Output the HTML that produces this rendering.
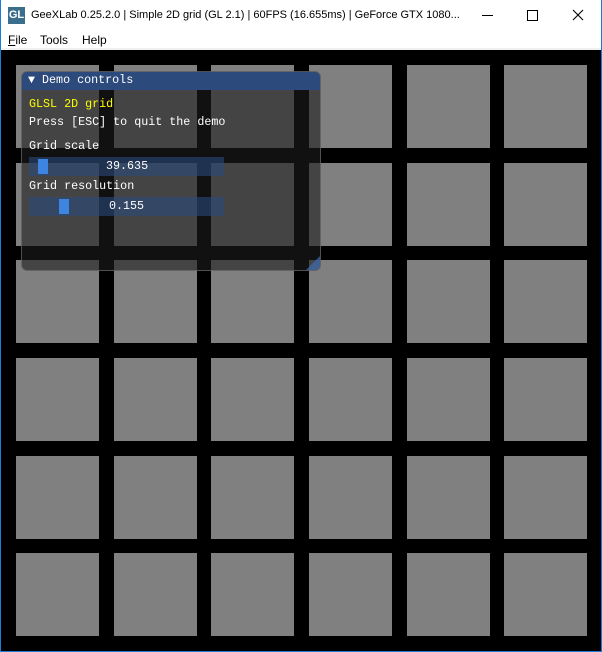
<!DOCTYPE html>
<html><head><style>
body{margin:0;width:602px;height:652px;overflow:hidden;background:#fff;font-family:"Liberation Sans",sans-serif;position:relative}
.abs{position:absolute}
.sq{position:absolute;width:83px;height:83px;background:#808080}
.mono{font-family:"Liberation Mono",monospace;font-size:11.7px;color:#fff;white-space:pre;position:absolute}
.m{position:absolute;top:33px;font-size:12px;color:#000}
</style></head><body>
<div class="abs" style="left:1px;top:50px;width:600px;height:601px;background:#000"></div>
<div class="sq" style="left:16px;top:65px"></div><div class="sq" style="left:114px;top:65px"></div><div class="sq" style="left:211px;top:65px"></div><div class="sq" style="left:309px;top:65px"></div><div class="sq" style="left:407px;top:65px"></div><div class="sq" style="left:504px;top:65px"></div>
<div class="sq" style="left:16px;top:163px"></div><div class="sq" style="left:114px;top:163px"></div><div class="sq" style="left:211px;top:163px"></div><div class="sq" style="left:309px;top:163px"></div><div class="sq" style="left:407px;top:163px"></div><div class="sq" style="left:504px;top:163px"></div>
<div class="sq" style="left:16px;top:260px"></div><div class="sq" style="left:114px;top:260px"></div><div class="sq" style="left:211px;top:260px"></div><div class="sq" style="left:309px;top:260px"></div><div class="sq" style="left:407px;top:260px"></div><div class="sq" style="left:504px;top:260px"></div>
<div class="sq" style="left:16px;top:358px"></div><div class="sq" style="left:114px;top:358px"></div><div class="sq" style="left:211px;top:358px"></div><div class="sq" style="left:309px;top:358px"></div><div class="sq" style="left:407px;top:358px"></div><div class="sq" style="left:504px;top:358px"></div>
<div class="sq" style="left:16px;top:456px"></div><div class="sq" style="left:114px;top:456px"></div><div class="sq" style="left:211px;top:456px"></div><div class="sq" style="left:309px;top:456px"></div><div class="sq" style="left:407px;top:456px"></div><div class="sq" style="left:504px;top:456px"></div>
<div class="sq" style="left:16px;top:553px"></div><div class="sq" style="left:114px;top:553px"></div><div class="sq" style="left:211px;top:553px"></div><div class="sq" style="left:309px;top:553px"></div><div class="sq" style="left:407px;top:553px"></div><div class="sq" style="left:504px;top:553px"></div>
<div class="abs" style="left:0;top:0;width:602px;height:652px;box-sizing:border-box;border:1px solid #1e7bd6;border-top:none"></div>
<div class="abs" style="left:8px;top:7px;width:17px;height:17px;background:#3a6e8a;color:#fff;font-size:11px;font-weight:bold;line-height:17px;text-align:center">GL</div>
<div class="abs" style="left:31px;top:9px;font-size:11px;color:#000;white-space:nowrap">GeeXLab 0.25.2.0 | Simple 2D grid (GL 2.1) | 60FPS (16.655ms) | GeForce GTX 1080...</div>
<div class="abs" style="left:482px;top:15px;width:11px;height:1px;background:#000"></div>
<div class="abs" style="left:527px;top:10px;width:9px;height:9px;border:1px solid #000"></div>
<svg class="abs" style="left:572px;top:9px" width="12" height="12"><path d="M1 1L11 11M11 1L1 11" stroke="#000" stroke-width="1.1"/></svg>
<div class="m" style="left:8px"><u>F</u>ile</div>
<div class="m" style="left:40px">Tools</div>
<div class="m" style="left:82px">Help</div>
<div class="abs" style="left:1px;top:48px;width:600px;height:2px;background:#f0f0f0"></div>
<div class="abs" style="left:21px;top:71px;width:298px;height:198px;background:rgba(28,28,28,0.6);border:1px solid rgba(120,120,130,0.6);border-radius:6px;overflow:hidden">
<div class="abs" style="left:0;top:0;width:298px;height:18px;background:#2d4a7d"></div>
<div class="abs" style="right:0;bottom:0;width:0;height:0;border-left:14px solid transparent;border-bottom:14px solid rgba(60,110,180,0.7)"></div>
</div>
<div class="mono" style="left:28px;top:73px">▼ Demo controls</div>
<div class="mono" style="left:29px;top:97px;color:#ffff00">GLSL 2D grid</div>
<div class="mono" style="left:29px;top:115px">Press [ESC] to quit the demo</div>
<div class="mono" style="left:29px;top:139px">Grid scale</div>
<div class="abs" style="left:29px;top:157px;width:195px;height:19px;background:rgba(41,74,122,0.6)"></div>
<div class="abs" style="left:38px;top:159px;width:10px;height:15px;background:#3d85e0"></div>
<div class="mono" style="left:106px;top:159px">39.635</div>
<div class="mono" style="left:29px;top:179px">Grid resolution</div>
<div class="abs" style="left:29px;top:197px;width:195px;height:19px;background:rgba(41,74,122,0.6)"></div>
<div class="abs" style="left:59px;top:199px;width:10px;height:15px;background:#3d85e0"></div>
<div class="mono" style="left:109px;top:199px">0.155</div>
</body></html>
